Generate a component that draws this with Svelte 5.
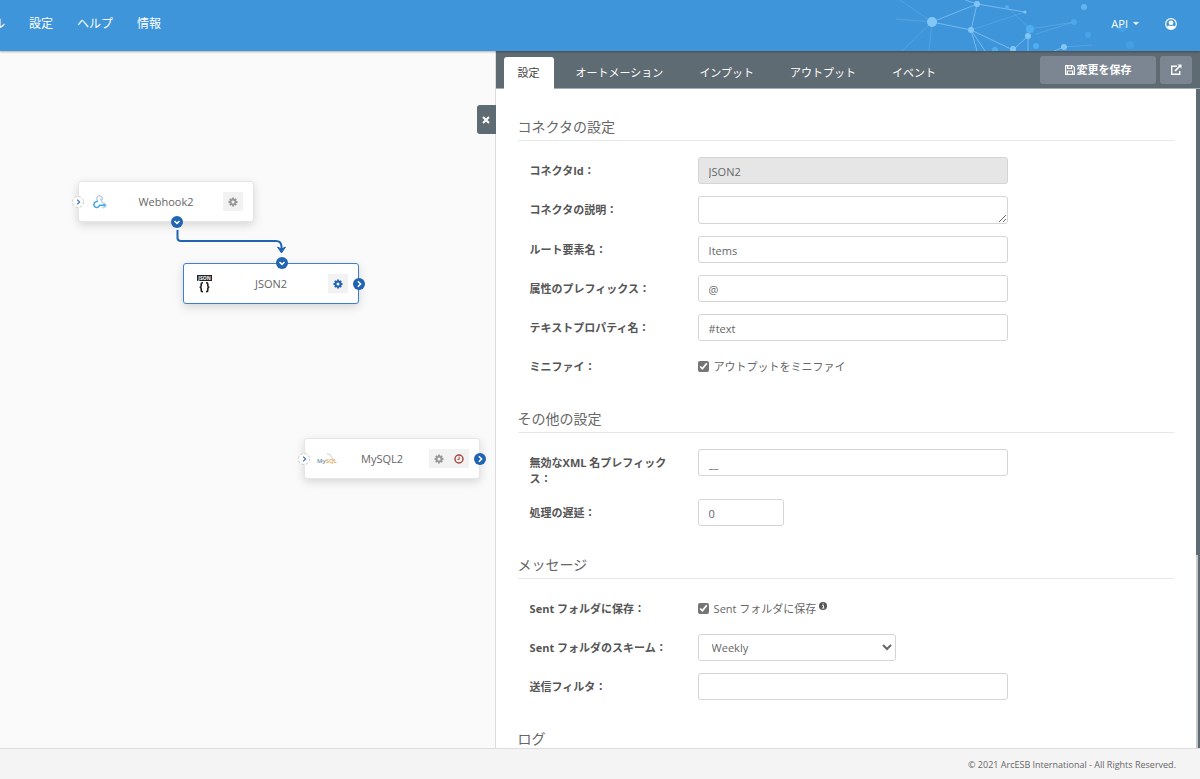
<script lang="ts">
  type Port = { side: string, kind: string };
  type Node = { id: string, type: string, x: number, y: number, selected: boolean, warning: boolean, ports: Port[] };

  let nodes: Node[] = [
    { id: "Webhook2", type: "webhook", x: 78, y: 130, selected: false, warning: false,
      ports: [{ side: "left", kind: "empty" }, { side: "bottom", kind: "down" }] },
    { id: "JSON2", type: "json", x: 183, y: 212, selected: true, warning: false,
      ports: [{ side: "top", kind: "down" }, { side: "right", kind: "next" }] },
    { id: "MySQL2", type: "mysql", x: 304, y: 387, selected: false, warning: true,
      ports: [{ side: "left", kind: "empty" }, { side: "right", kind: "next" }] },
  ];

  let tabs = ["設定", "オートメーション", "インプット", "アウトプット", "イベント"];
  let activeTab = $state("設定");

  let connectorId = $state("JSON2");
  let description = $state("");
  let rootElement = $state("Items");
  let attrPrefix = $state("@");
  let textProperty = $state("#text");
  let minify = $state(true);
  let xmlPrefix = $state("__");
  let delay = $state("0");
  let saveSent = $state(true);
  let scheme = $state("Weekly");
  let sendFilter = $state("");
</script>

{#snippet gear()}
  <svg class="icon" viewBox="0 0 16 16" fill="none" stroke="currentColor">
    <circle cx="8" cy="8" r="4" stroke-width="3.2" />
    <path stroke-width="3" d="M8 .8v3M8 12.2v3M.8 8h3M12.2 8h3M2.9 2.9l2 2M11.1 11.1l2 2M13.1 2.9l-2 2M4.9 11.1l-2 2" />
  </svg>
{/snippet}

{#snippet port(kind: string)}
  {#if kind == "empty"}
    <svg viewBox="0 0 12 12" fill="none">
      <circle cx="6" cy="6" r="5.5" fill="#fff" stroke="#c4c4c4" stroke-dasharray="2.4 1.9" />
      <path d="M5.2 3.6L7.6 6L5.2 8.4" stroke="#3f73b5" stroke-width="1.2" />
    </svg>
  {:else}
    <svg viewBox="0 0 12 12" fill="none">
      <circle cx="6" cy="6" r="6" fill="#2164b4" />
      <path d={kind == "down" ? "M3.5 5L6 7.4L8.5 5" : "M4.9 3.3L7.6 6L4.9 8.7"} stroke="#fff" stroke-width="1.5" />
    </svg>
  {/if}
{/snippet}

<div class="page">
  <header>
    <svg class="network" viewBox="0 0 350 51" fill="none" stroke="#8ccaf8">
      <g stroke-width=".8" opacity=".35">
        <path d="M82 22L50 0M82 22L46 19M82 22L52 51M82 22L79 51M121 30L175 12M157 7L180 29L224 22M186 34L224 22M214 47L242 45" />
      </g>
      <g opacity=".7">
        <path d="M82 22L127 4L121 30ZM115 0L127 4L175 12M121 30L163 50L178 36V51M121 30L127 51M121 30L135 51M204 51L214 47" />
      </g>
      <g fill="#82c6f6" stroke="none">
        <circle cx="82" cy="22" r="5" />
        <circle cx="127" cy="4" r="3" />
        <circle cx="121" cy="30" r="3" />
        <circle cx="163" cy="49" r="3" />
        <circle cx="178" cy="36" r="3" />
        <circle cx="175" cy="12" r="1.6" />
        <circle cx="214" cy="47" r="3" />
        <circle cx="234" cy="7" r="3" opacity=".6" />
      </g>
      <g fill="#4eaef1" stroke="none">
        <circle cx="180" cy="29" r="4" />
        <circle cx="186" cy="46" r="3" />
        <circle cx="145" cy="50" r="3" />
        <circle cx="157" cy="7" r="2" />
        <circle cx="224" cy="22" r="3" opacity=".7" />
        <circle cx="238" cy="35" r="3" opacity=".6" />
        <circle cx="272" cy="28" r="4" opacity=".4" />
        <circle cx="280" cy="45" r="4" opacity=".4" />
      </g>
    </svg>
    <nav>
      <a href="#profile">ル</a>
      <a href="#settings">設定</a>
      <a href="#help">ヘルプ</a>
      <a href="#about">情報</a>
    </nav>
    <div class="account">
      <button class="api">API <span class="caret"></span></button>
      <button class="user" aria-label="user">
        <svg viewBox="0 0 12 12">
          <circle cx="6" cy="6" r="5.3" fill="none" stroke="#fff" stroke-width="1.2" />
          <circle cx="6" cy="4.8" r="2.4" fill="#fff" />
          <path d="M1.8 9.2Q2.4 7.4 4.4 7.4Q6 8.4 7.6 7.4Q9.6 7.4 10.200 9.200Q6 13.500 1.800 9.200Z" fill="#fff" />
        </svg>
      </button>
    </div>
  </header>

  <main>
    <section class="canvas">
      <svg class="links" fill="none" stroke="#2164b4" stroke-width="2">
        <path d="M177.500 179V187Q177.500 190 181 190H276Q281.500 190 281.500 196V200" />
        <path d="M277.500 196L281.500 202L285.500 196L281.500 198Z" fill="#2164b4" stroke-width="1" />
      </svg>
      {#each nodes as node}
        <div class="node" class:selected={node.selected} style="left: {node.x}px; top: {node.y}px;">
          <div class="logo">
            {#if node.type == "webhook"}
              <svg viewBox="0 0 14 14" fill="none" stroke-width="1.5">
                <path d="M5.3 6.2A2.8 2.8 0 1 1 9.3 4.5L8.2 5.5" stroke="#c3cfdc" />
                <path d="M7 3.5L9.8 8.2A2.3 2.3 0 1 1 9 12" stroke="#c3dcee" />
                <path d="M4.800 6.800A2.900 2.900 0 1 0 6.600 10.300H11" stroke="#45a7e6" />
                <circle cx="11.300" cy="10.200" r="1.300" fill="#45a7e6" />
              </svg>
            {:else if node.type == "json"}
              <svg class="big" viewBox="0 0 18 18">
                <rect x="1" y="0" width="15" height="6" fill="#222" />
                <text x="8.5" y="5" font-size="5" font-weight="700" text-anchor="middle" fill="#fff">JSON</text>
                <path d="M7 7.800H6.500Q5.200 7.800 5.200 9V10.800Q5.200 12.200 3.600 12.200Q5.200 12.200 5.200 13.600V15.400Q5.200 16.600 6.500 16.600H7M10 7.800H10.500Q11.800 7.800 11.800 9V10.800Q11.800 12.200 13.400 12.200Q11.800 12.200 11.800 13.600V15.400Q11.800 16.600 10.500 16.600H10" fill="none" stroke="#222" stroke-width="1.600" />
              </svg>
            {:else}
              <svg class="big" viewBox="0 0 18 18">
                <text x="0" y="13" font-size="6" font-weight="600" fill="#6f8fa8">My<tspan fill="#e8a33d">SQL</tspan></text>
                <path d="M10 3.5Q14 4 15 8Q17 9 16.500 11" fill="none" stroke="#b9c7d1" stroke-width=".8" />
              </svg>
            {/if}
          </div>
          <span class="title">{node.id}</span>
          <div class="actions">
            <button aria-label="settings">{@render gear()}</button>
            {#if node.warning}
              <button class="warning" aria-label="schedule">
                <svg class="icon" viewBox="0 0 12 12" fill="none" stroke="currentColor">
                  <circle cx="6" cy="6" r="4.8" stroke-width="1.7" />
                  <path d="M6.2 3.2V6.5H4" stroke-width="1.2" />
                </svg>
              </button>
            {/if}
          </div>
          {#each node.ports as p}
            <span class="port {p.side}">{@render port(p.kind)}</span>
          {/each}
        </div>
      {/each}
    </section>

    <section class="panel">
      <button class="close" aria-label="close">
        <svg viewBox="0 0 8 8" fill="none" stroke="#fff" stroke-width="2"><path d="M1 1l6 6M7 1L1 7" /></svg>
      </button>

      <div class="tabbar">
        <div class="tabs">
          {#each tabs as tab}
            <button class="tab" class:active={tab == activeTab} onclick={() => activeTab = tab}>{tab}</button>
          {/each}
        </div>
        <div class="tools">
          <button class="save">
            <svg viewBox="0 0 10 10" fill="none" stroke="#fff" stroke-width="1.2">
              <path d="M.6.6h6.800l2 2v6.800H.6z" />
              <path d="M2.6.6v2.800h4V.6M2.400 9.400V6h5.200v3.400" />
            </svg>変更を保存</button>
          <button class="popout" aria-label="open">
            <svg viewBox="0 0 12 12" fill="none" stroke="#fff" stroke-width="1.4">
              <path d="M7 2.200H1.700v8.100h8V7" />
              <path d="M5 7L10 2" stroke-width="1.7" />
              <path d="M7.500.5h4v4z" fill="#fff" stroke="none" />
            </svg>
          </button>
        </div>
      </div>

      <div class="body">
        <form>
          <h2>コネクタの設定</h2>
          <div class="row">
            <label for="connectorId">コネクタId：</label>
            <input id="connectorId" type="text" bind:value={connectorId} disabled />
          </div>
          <div class="row">
            <label for="description">コネクタの説明：</label>
            <textarea id="description" rows="1" bind:value={description}></textarea>
          </div>
          <div class="row">
            <label for="rootElement">ルート要素名：</label>
            <input id="rootElement" type="text" bind:value={rootElement} />
          </div>
          <div class="row">
            <label for="attrPrefix">属性のプレフィックス：</label>
            <input id="attrPrefix" type="text" bind:value={attrPrefix} />
          </div>
          <div class="row">
            <label for="textProperty">テキストプロパティ名：</label>
            <input id="textProperty" type="text" bind:value={textProperty} />
          </div>
          <div class="row">
            <span class="label">ミニファイ：</span>
            <label class="check"><input type="checkbox" bind:checked={minify} />アウトプットをミニファイ</label>
          </div>

          <h2>その他の設定</h2>
          <div class="row">
            <label for="xmlPrefix">無効なXML 名プレフィックス：</label>
            <input id="xmlPrefix" type="text" bind:value={xmlPrefix} />
          </div>
          <div class="row">
            <label for="delay">処理の遅延：</label>
            <input id="delay" class="short" type="text" bind:value={delay} />
          </div>

          <h2>メッセージ</h2>
          <div class="row">
            <span class="label">Sent フォルダに保存：</span>
            <label class="check">
              <input type="checkbox" bind:checked={saveSent} />Sent フォルダに保存
              <svg class="info" viewBox="0 0 8 8">
                <circle cx="4" cy="4" r="4" fill="#555" />
                <path d="M3 3.400h1.500V6M2.800 6.100h2.600M3.600 1.900h1.100" stroke="#fff" stroke-width=".9" fill="none" />
              </svg>
            </label>
          </div>
          <div class="row">
            <label for="scheme">Sent フォルダのスキーム：</label>
            <select id="scheme" bind:value={scheme}>
              <option>Weekly</option>
            </select>
          </div>
          <div class="row">
            <label for="sendFilter">送信フィルタ：</label>
            <input id="sendFilter" type="text" bind:value={sendFilter} />
          </div>

          <h2>ログ</h2>
        </form>
        <div class="scrollbar"><div class="thumb"></div></div>
      </div>
    </section>
  </main>

  <footer>© 2021 ArcESB International - All Rights Reserved.</footer>
</div>

<style>
:global(body) {
  margin: 0;
}

.page, .page * {
  box-sizing: border-box;
}

.page {
  display: flex;
  flex-direction: column;
  height: 100vh;
  overflow: hidden;
  font-family: "Open Sans", "Noto Sans CJK JP", sans-serif;
  font-size: 11px;
  line-height: 16px;
  color: #666;
}

button, input, select, textarea {
  font: inherit;
  color: inherit;
}

button {
  border: 0;
  padding: 0;
  background: none;
  cursor: pointer;
}

svg {
  display: block;
}

header {
  position: relative;
  z-index: 2;
  display: flex;
  justify-content: space-between;
  align-items: center;
  flex: none;
  height: 51px;
  padding: 0 23px 4px 0;
  background: #3e95da;
  box-shadow: 0 1px 2px rgba(0, 0, 0, 0.3);
}

.network {
  position: absolute;
  top: 0;
  right: 0;
  width: 350px;
  height: 51px;
}

nav {
  display: flex;
  gap: 24px;
  margin-left: -7px;
  font-size: 12px;
}

nav a {
  color: #fff;
  text-decoration: none;
}

.account {
  position: relative;
  display: flex;
  align-items: center;
  gap: 26px;
  color: #fff;
}

.api {
  display: flex;
  align-items: center;
  gap: 5px;
}

.caret {
  border: 3px solid transparent;
  border-top-color: #fff;
  border-bottom: 0;
}

.user svg {
  width: 12px;
  height: 12px;
}

main {
  display: flex;
  flex: 1;
  min-height: 0;
}

.canvas {
  position: relative;
  flex: 33;
  min-width: 0;
  overflow: hidden;
  border-right: 1px solid #ddd;
  background: #fafafa;
}

.links {
  position: absolute;
  left: 0;
  top: 0;
  width: 100%;
  height: 100%;
}

.node {
  position: absolute;
  display: flex;
  align-items: center;
  width: 176px;
  height: 41px;
  padding: 0 10px 0 12px;
  border: 1px solid #e6e6e6;
  border-radius: 3px;
  background: #fff;
  box-shadow: 0 3px 10px rgba(0, 0, 0, 0.15);
}

.node.selected {
  border-color: #3c7fca;
}

.logo {
  display: flex;
  justify-content: center;
  width: 18px;
}

.logo svg {
  width: 14px;
  height: 14px;
}

.logo .big {
  width: 18px;
  height: 18px;
  overflow: visible;
}

.title {
  flex: 1;
  text-align: center;
}

.actions {
  display: flex;
  background: #f2f2f2;
  color: #999;
}

.actions button {
  display: flex;
  align-items: center;
  justify-content: center;
  width: 20px;
  height: 19px;
}

.selected .actions {
  color: #2164b4;
}

.actions .warning {
  color: #a3473c;
}

.icon {
  width: 10px;
  height: 10px;
}

.port {
  position: absolute;
  width: 12px;
  height: 12px;
}

.port.left {
  left: -7px;
  top: 14px;
}

.port.right {
  right: -7px;
  top: 14px;
}

.port.top {
  left: 92px;
  top: -7px;
}

.port.bottom {
  left: 92px;
  bottom: -7px;
}

.panel {
  position: relative;
  display: flex;
  flex-direction: column;
  flex: 47;
  min-width: 0;
  background: #fff;
}

.close {
  position: absolute;
  top: 54px;
  left: -19px;
  display: flex;
  align-items: center;
  justify-content: center;
  width: 19px;
  height: 29px;
  border-radius: 3px 0 0 3px;
  background: #5f6b73;
}

.close svg {
  width: 8px;
  height: 8px;
}

.tabbar {
  display: flex;
  justify-content: space-between;
  align-items: flex-end;
  flex: none;
  height: 38px;
  padding: 0 8px;
  border-bottom: 1px solid #a3abb3;
  background: #5f6b73;
}

.tabs {
  display: flex;
  gap: 8px;
  margin-bottom: -1px;
}

.tab {
  height: 32px;
  padding: 0 14px;
  border-radius: 3px 3px 0 0;
  color: #fff;
  white-space: nowrap;
}

.tab.active {
  background: #fff;
  color: #444;
}

.tools {
  display: flex;
  gap: 4px;
  align-self: flex-start;
  padding-top: 5px;
}

.tools button {
  display: flex;
  align-items: center;
  justify-content: center;
  gap: 2px;
  height: 28px;
  border-radius: 3px;
  background: #7b8692;
  color: #fff;
  font-weight: 600;
}

.tools .save {
  width: 116px;
}

.tools .popout {
  width: 32px;
}

.save svg {
  width: 10px;
  height: 10px;
}

.popout svg {
  width: 12px;
  height: 12px;
}

.body {
  display: flex;
  flex: 1;
  min-height: 0;
  overflow: hidden;
}

form {
  flex: 1;
  padding: 28px 22px 0;
}

h2 {
  margin: 29px 0 16px;
  padding-bottom: 3px;
  border-bottom: 1px solid #e8e8e8;
  font-size: 14px;
  font-weight: 400;
  line-height: 20px;
}

h2:first-child {
  margin-top: 0;
}

.row {
  display: grid;
  grid-template-columns: 144px minmax(0, 310px);
  column-gap: 24px;
  align-items: start;
  margin-bottom: 12px;
  padding-left: 12px;
}

.row > label:first-child, .label {
  padding-top: 6px;
  font-weight: 700;
  color: #555;
}

.row > input, .row > select, .row > textarea {
  display: block;
  width: 100%;
  height: 27px;
  margin: 0;
  padding: 1px 10px 0;
  border: 1px solid #d5d5d5;
  border-radius: 3px;
  background: #fff;
}

.row > textarea {
  height: 28px;
}

.row > input:disabled {
  background: #e6e6e6;
}

.row > .short {
  width: 86px;
}

.row > select {
  width: 198px;
  padding: 0 0 0 9px;
}

.check {
  display: flex;
  align-items: center;
  height: 27px;
}

.check input {
  width: 11px;
  height: 11px;
  margin: 0 5px 0 0;
  accent-color: #757575;
}

.info {
  width: 8px;
  height: 8px;
  margin: 0 0 6px 3px;
}

.scrollbar {
  width: 4px;
  border-left: 2px solid #c8c8c8;
  background: #5f6b73;
}

.thumb {
  width: 4px;
  height: 466px;
  margin-left: -2px;
  background: #5f6b73;
}

footer {
  flex: none;
  height: 31px;
  padding: 8px 24px 0;
  border-top: 1px solid #ddd;
  background: #f4f4f4;
  font-size: 9px;
  text-align: right;
}
</style>
